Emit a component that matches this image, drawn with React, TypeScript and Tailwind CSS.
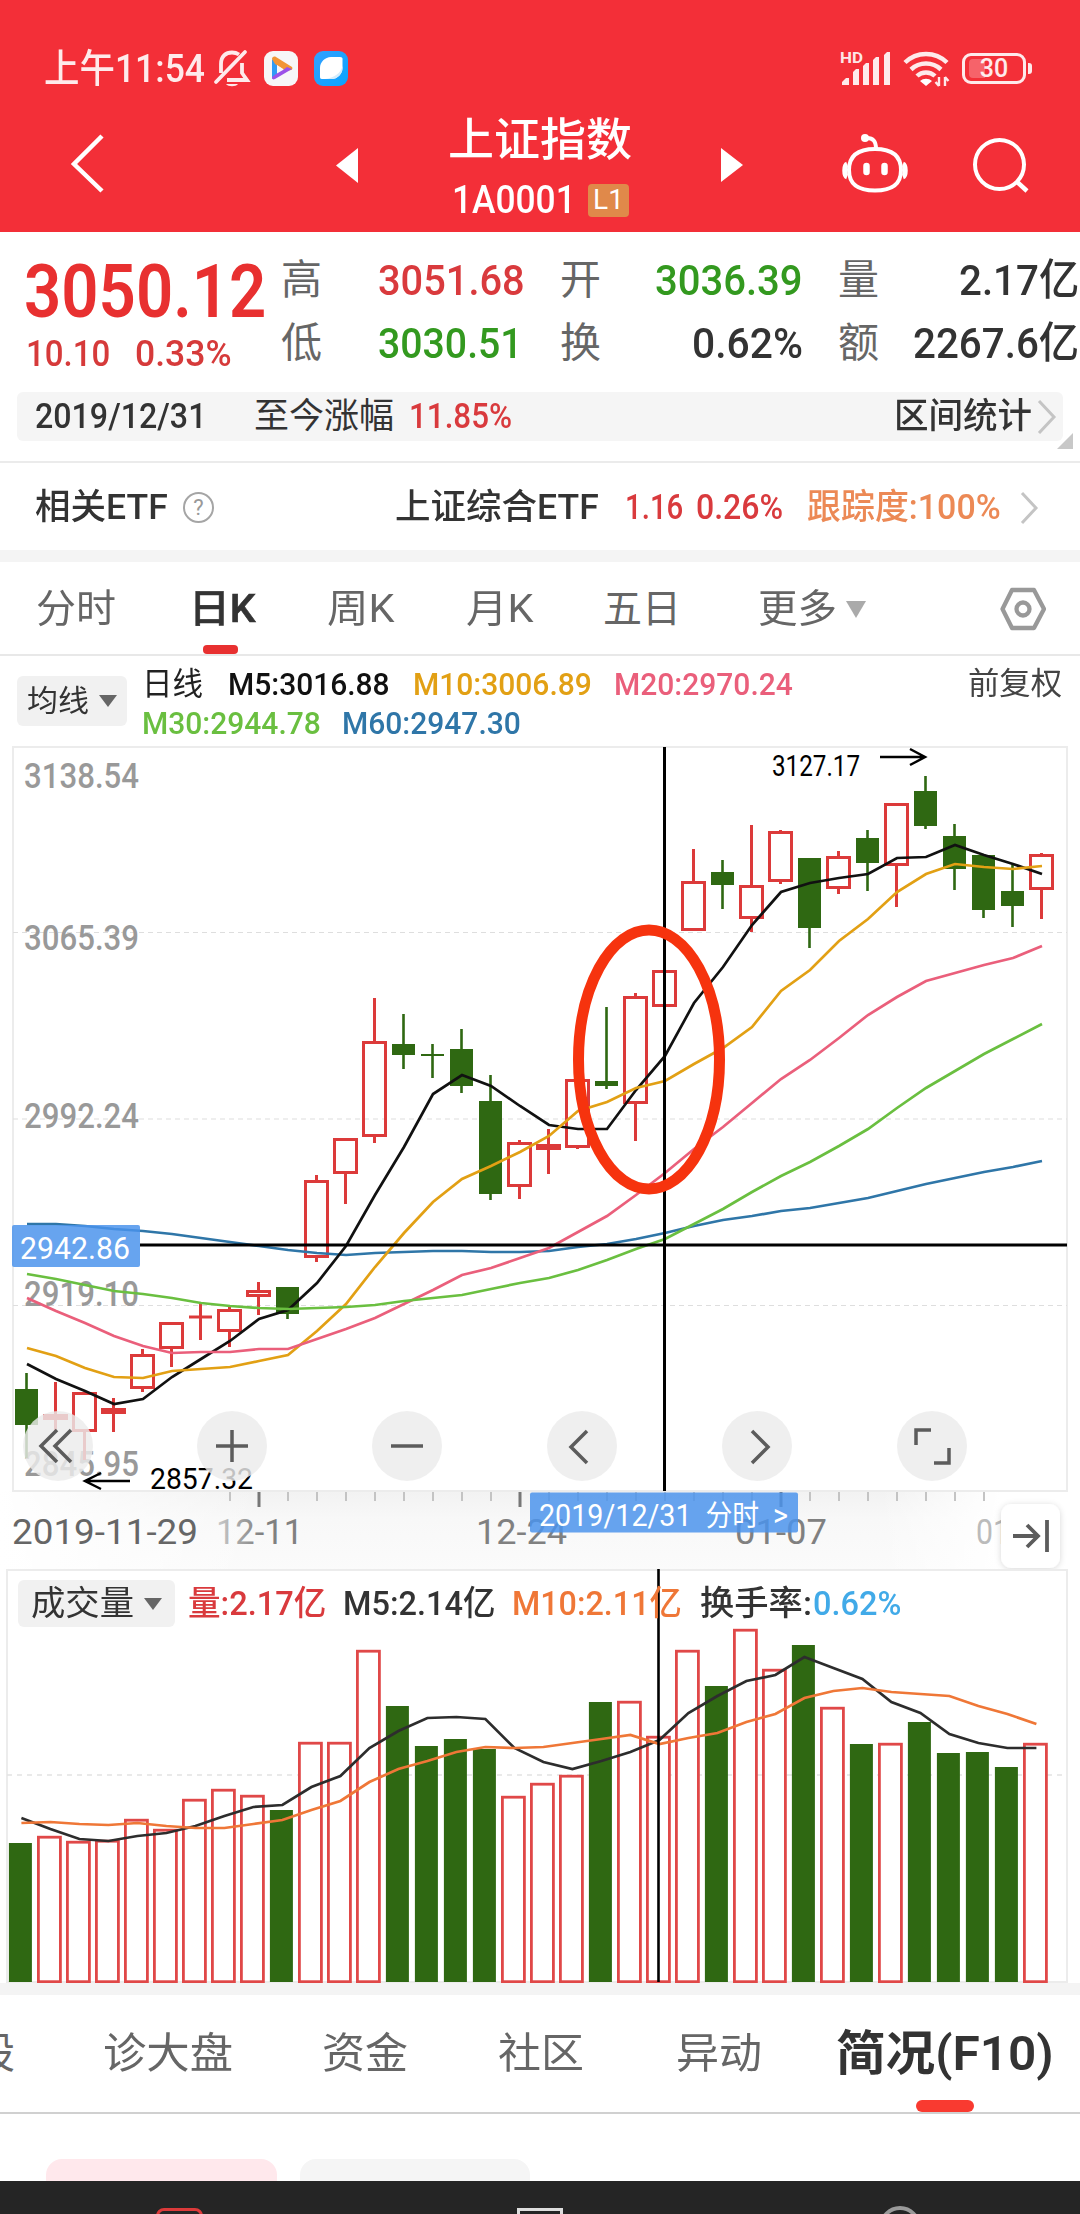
import { ReactNode, useLayoutEffect, useRef, useState } from "react";

/* Single-line text squeezed or stretched horizontally to a given width. */
function Fit({ w, className = "", children }: { w: number; className?: string; children: ReactNode }) {
  const ref = useRef<HTMLSpanElement>(null);
  const [k, setK] = useState(1);
  useLayoutEffect(() => {
    if (ref.current) setK(w / ref.current.offsetWidth);
  }, [w, children]);
  return (
    <span className={`block shrink-0 ${className}`} style={{ width: w }}>
      <span ref={ref} className="inline-block origin-left whitespace-nowrap" style={{ transform: `scaleX(${k})` }}>
        {children}
      </span>
    </span>
  );
}

type Candle = [up: number, top: number, bottom: number, high: number, low: number];

const candles: Candle[] = [
  [0, 1389, 1425, 1373, 1458], [1, 1414, 1420, 1382, 1432], [1, 1392, 1432, 1392, 1460], [1, 1408, 1414, 1398, 1432],
  [1, 1354, 1389, 1349, 1392], [1, 1322, 1349, 1322, 1367], [1, 1316, 1318, 1304, 1340], [1, 1309, 1332, 1307, 1347],
  [1, 1290, 1297, 1282, 1315], [0, 1287, 1314, 1287, 1319], [1, 1180, 1258, 1175, 1262], [1, 1138, 1174, 1138, 1204],
  [1, 1041, 1137, 998, 1143], [0, 1044, 1055, 1014, 1069], [0, 1054, 1056, 1044, 1078], [0, 1049, 1086, 1029, 1093],
  [0, 1101, 1194, 1075, 1200], [1, 1142, 1187, 1140, 1199], [1, 1144, 1150, 1129, 1174], [1, 1079, 1148, 1079, 1149],
  [0, 1081, 1086, 1007, 1089], [1, 996, 1104, 993, 1141], [1, 970, 1007, 970, 1021], [1, 881, 931, 849, 931],
  [0, 872, 885, 860, 909], [1, 885, 919, 825, 932], [1, 831, 882, 830, 884], [0, 858, 928, 858, 948],
  [1, 856, 889, 851, 894], [0, 838, 863, 830, 891], [1, 803, 866, 803, 907], [0, 791, 826, 776, 829],
  [0, 836, 869, 824, 890], [0, 855, 910, 855, 918], [0, 891, 906, 865, 927], [1, 854, 890, 853, 919],
];

const averages: { color: string; ys: number[] }[] = [
  { color: "#2f76a8", ys: [1224, 1224, 1226, 1229, 1231, 1234, 1238, 1242, 1246, 1250, 1253, 1255, 1253, 1252, 1251, 1251, 1252, 1252, 1251, 1247, 1244, 1239, 1233, 1226, 1220, 1216, 1211, 1208, 1203, 1198, 1191, 1184, 1178, 1172, 1167, 1161] },
  { color: "#111111", ys: [1364, 1379, 1391, 1404, 1399, 1377, 1359, 1341, 1319, 1310, 1283, 1246, 1195, 1147, 1094, 1075, 1086, 1106, 1125, 1129, 1129, 1090, 1056, 1003, 967, 925, 892, 883, 878, 874, 858, 857, 845, 855, 864, 874] },
  { color: "#e2a014", ys: [1348, 1356, 1368, 1377, 1378, 1371, 1369, 1367, 1361, 1355, 1331, 1304, 1267, 1233, 1202, 1179, 1166, 1152, 1136, 1111, 1102, 1088, 1081, 1064, 1048, 1027, 991, 970, 941, 919, 892, 874, 864, 867, 869, 866] },
  { color: "#ea5f7b", ys: [1298, 1311, 1323, 1336, 1346, 1353, 1352, 1352, 1349, 1349, 1339, 1329, 1318, 1304, 1290, 1275, 1268, 1258, 1248, 1232, 1216, 1195, 1173, 1149, 1127, 1103, 1079, 1060, 1038, 1015, 997, 981, 973, 965, 958, 946] },
  { color: "#6abf40", ys: [1274, 1279, 1285, 1291, 1294, 1298, 1303, 1306, 1308, 1309, 1308, 1307, 1305, 1301, 1298, 1295, 1289, 1283, 1278, 1270, 1260, 1249, 1239, 1224, 1209, 1192, 1176, 1162, 1146, 1129, 1108, 1088, 1071, 1054, 1039, 1024] },
];

const volumeTops = [1843, 1836, 1841, 1840, 1819, 1829, 1799, 1789, 1795, 1810, 1742, 1742, 1650, 1706, 1746, 1739, 1749, 1796, 1783, 1775, 1702, 1701, 1736, 1650, 1686, 1629, 1669, 1645, 1707, 1744, 1743, 1722, 1753, 1752, 1767, 1743];
const volumeUp = [0, 1, 1, 1, 1, 1, 1, 1, 1, 0, 1, 1, 1, 0, 0, 0, 0, 1, 1, 1, 0, 1, 1, 1, 0, 1, 1, 0, 1, 0, 1, 0, 0, 0, 0, 1];
const volumeM5 = [1818, 1829, 1839, 1841, 1836, 1833, 1826, 1816, 1807, 1805, 1787, 1776, 1748, 1731, 1718, 1717, 1719, 1748, 1762, 1769, 1761, 1752, 1740, 1713, 1696, 1681, 1675, 1657, 1668, 1679, 1702, 1713, 1734, 1743, 1748, 1748];
const volumeM10 = [1823, 1822, 1824, 1825, 1823, 1826, 1828, 1828, 1824, 1820, 1810, 1801, 1782, 1769, 1761, 1752, 1747, 1748, 1747, 1743, 1739, 1735, 1744, 1738, 1733, 1722, 1714, 1698, 1691, 1688, 1692, 1694, 1696, 1706, 1714, 1724];

const line = (ys: number[], x0: number) => ys.map((y, i) => `${(x0 + i * 29).toFixed(1)},${y}`).join(" ");

function StatusBar() {
  return (
    <div className="flex h-[60px] items-center pl-[44px] pr-[48px] text-white/90">
      <Fit w={161} className="pt-[1px] text-[39px] font-medium leading-[60px]">上午11:54</Fit>
      <svg className="ml-[8px]" width="38" height="40" viewBox="0 0 38 40" fill="none" stroke="#fff" strokeOpacity=".9" strokeWidth="3.800">
        <path d="M8 25V16C8 8 13 4.500 19 4.500c3 0 5 .7 7 2M29 15v10l5 7H14" />
        <path d="M32 4L3 34" strokeLinecap="round" />
        <path d="M13 36h12c-2 3-10 3-12 0z" fill="#fff" stroke="none" fillOpacity=".9" />
      </svg>
      <svg className="ml-[13px]" width="34" height="35" viewBox="0 0 34 35">
        <rect width="34" height="35" rx="9" fill="#f7f6f8" />
        <path d="M8 8v20l5-3V12z" fill="#2f9bf5" />
        <path d="M8 8c0-2 2-3 4-2l16 10c1 1 0 3-1 3l-5 1-11-7z" fill="#f29435" />
        <path d="M28 18L11 28c-2 1-3 0-3-2l4-3 7-4 4-3z" fill="#9b51e8" />
        <path d="M13 14v8l6-4z" fill="#f7f6f8" />
      </svg>
      <svg className="ml-[16px]" width="34" height="35" viewBox="0 0 34 35">
        <defs>
          <linearGradient id="sky" x1="0" x2="1" y1="0" y2="1">
            <stop offset="0" stopColor="#34a0ff" />
            <stop offset="1" stopColor="#08a4ff" />
          </linearGradient>
        </defs>
        <rect width="34" height="35" rx="9" fill="url(#sky)" />
        <path d="M17 6h9c2 0 3 1 2.500 3V17c0 6-5 11-11 11H8c-2 0-2-1-2-3v-8C6 11 11 6 17 6z" fill="#fff" />
        <path d="M28.500 15v2c0 6-5 11-11 11H11C20 27 27 22 28.500 15z" fill="#d5ecfb" />
      </svg>
      <svg className="ml-auto" width="52" height="37" viewBox="0 0 52 37" fill="#fff" fillOpacity=".9">
        <text x="0" y="13" fontSize="15" fontWeight="700" fontFamily="Roboto, sans-serif" textLength="23" lengthAdjust="spacingAndGlyphs">HD</text>
        <path d="M2 32l4-4h3v7H2z" />
        <path d="M13 22l3-3h3v16h-6z" />
        <path d="M23 16l3-3h3v22h-6z" />
        <path d="M33 10l3-3h3v28h-6z" />
        <path d="M44 5l3-3h3v33h-6z" />
      </svg>
      <svg className="ml-[11px]" width="48" height="37" viewBox="0 0 48 37" fill="none" stroke="#fff" strokeOpacity=".9" strokeWidth="4.500">
        <path d="M2 12.500a30 30 0 0 1 42 0" />
        <path d="M8 19.500a22 22 0 0 1 30 0" />
        <path d="M14 26a13 13 0 0 1 18 0" />
        <path d="M17 31a9 9 0 0 1 12 0l-6 5z" fill="#fff" stroke="none" />
        <path d="M36 27v9m-3.500-4l3.500 4M42 36v-9m3.500 4l-3.500-4" strokeWidth="2.400" />
      </svg>
      <span className="relative ml-[11px] flex h-[31px] w-[64px] items-center justify-center rounded-[9px] border-[3px] border-white/90">
        <span className="absolute left-[4px] top-[3px] h-[19px] w-[16px] rounded-l-[4px] bg-white/25" />
        <span className="relative text-[25px] font-medium leading-none">30</span>
      </span>
      <span className="ml-[2px] h-[11px] w-[4px] rounded-r-[3px] bg-white/90" />
    </div>
  );
}

function TitleBar() {
  return (
    <div className="flex h-[134px] items-start text-white">
      <svg className="ml-[68px] mt-[35px]" width="38" height="62" viewBox="0 0 38 62" fill="none" stroke="#fff" strokeWidth="4.500">
        <path d="M34 3L6 31l28 27" />
      </svg>
      <svg className="ml-[230px] mt-[50px]" width="22" height="35" viewBox="0 0 22 35" fill="#fff"><path d="M22 0v35L0 17.500z" /></svg>
      <div className="ml-[90px] flex w-[184px] flex-col items-start">
        <Fit w={184} className="mt-[16px] text-[45px] font-medium leading-[54px]">上证指数</Fit>
        <div className="mt-[10px] flex items-center pl-[4px]">
          <Fit w={124} className="text-[39px] font-medium leading-[44px]">1A0001</Fit>
          <span className="ml-[12px] flex h-[33px] w-[41px] items-center justify-center rounded-[4px] bg-[#e0894a] text-[28px] leading-none">L1</span>
        </div>
      </div>
      <svg className="ml-[89px] mt-[50px]" width="22" height="34" viewBox="0 0 22 34" fill="#fff"><path d="M0 0v34l22-17z" /></svg>
      <svg className="ml-[99px] mt-[35px]" width="66" height="62" viewBox="0 0 66 62" fill="none" stroke="#fff" strokeWidth="4">
        <path d="M33 16c15 0 26 5 26 21S48 57.500 33 57.500 7 53 7 37s11-21 26-21z" />
        <path d="M5 31c-3 1-3 12 0 13M61 31c3 1 3 12 0 13" strokeWidth="5" />
        <path d="M34 16c0-8-3-11-9-11" strokeLinecap="round" />
        <circle cx="23" cy="5" r="4" fill="#fff" stroke="none" />
        <path d="M24.500 33v6M42.500 33v6" strokeWidth="6.500" strokeLinecap="round" />
      </svg>
      <svg className="ml-[63px] mt-[38px]" width="60" height="60" viewBox="0 0 60 60" fill="none" stroke="#fff" strokeWidth="4">
        <circle cx="28.500" cy="28.500" r="24.500" />
        <path d="M45 45l11 10" strokeWidth="4.500" />
      </svg>
    </div>
  );
}

function Quote() {
  return (
    <div className="flex h-[160px] items-start whitespace-nowrap text-[43px] font-medium leading-[63px] text-[#333]">
      <div className="ml-[24px] w-[257px]">
        <Fit w={242} className="mt-[21px] text-[75px] font-semibold leading-[76px] text-[#e83030]">3050.12</Fit>
        <div className="mt-[6px] flex items-start pl-[2px] text-[37px] leading-[38px] text-[#d63a3a]">
          <Fit w={84}>10.10</Fit>
          <Fit w={97} className="ml-[25px]">0.33%</Fit>
        </div>
      </div>
      <div className="mt-[17px] w-[279px]">
        <div className="flex"><span className="w-[97px] text-[41px] font-normal text-[#666]">高</span><Fit w={147} className="text-[#d93a3d]">3051.68</Fit></div>
        <div className="flex"><span className="w-[97px] text-[41px] font-normal text-[#666]">低</span><Fit w={145} className="text-[#33991f]">3030.51</Fit></div>
      </div>
      <div className="mt-[17px] w-[278px]">
        <div className="flex"><span className="w-[95px] text-[41px] font-normal text-[#666]">开</span><Fit w={148} className="text-[#33991f]">3036.39</Fit></div>
        <div className="flex"><span className="w-[132px] text-[41px] font-normal text-[#666]">换</span><Fit w={111}>0.62%</Fit></div>
      </div>
      <div className="mt-[17px] w-[242px]">
        <div className="flex"><span className="w-[121px] text-[41px] font-normal text-[#666]">量</span><Fit w={120}>2.17亿</Fit></div>
        <div className="flex"><span className="w-[75px] text-[41px] font-normal text-[#666]">额</span><Fit w={166}>2267.6亿</Fit></div>
      </div>
    </div>
  );
}

function RangeRow() {
  return (
    <div className="relative h-[71px] border-b-2 border-[#ebebeb]">
      <div className="ml-[17px] flex h-[49px] w-[1046px] items-center rounded-[6px] bg-[#f5f5f5] pl-[18px] pt-[1px] text-[35px] leading-[48px] text-[#333]">
        <Fit w={171} className="font-medium">2019/12/31</Fit>
        <Fit w={140} className="ml-[48px]">至今涨幅</Fit>
        <Fit w={103} className="ml-[15px] font-medium text-[#d93a3d]">11.85%</Fit>
        <Fit w={138} className="ml-auto font-medium">区间统计</Fit>
        <svg className="ml-[5px] mr-[6px]" width="20" height="34" viewBox="0 0 20 34" fill="none" stroke="#c4c4c4" strokeWidth="3"><path d="M2 1l15 16L2 33" /></svg>
      </div>
      <svg className="absolute left-[1057px] top-[41px]" width="16" height="16" viewBox="0 0 16 16"><path d="M16 0v16H0z" fill="#c8c8c8" /></svg>
    </div>
  );
}

function EtfRow() {
  return (
    <div className="flex h-[87px] items-center pl-[35px] pt-[2px] text-[35px] font-medium leading-[50px] text-[#333]">
      <Fit w={133}>相关ETF</Fit>
      <span className="ml-[15px] flex size-[31px] items-center justify-center rounded-full border-2 border-[#a5a5a5] text-[22px] font-normal leading-none text-[#999]">?</span>
      <Fit w={204} className="ml-[181px]">上证综合ETF</Fit>
      <Fit w={58} className="ml-[26px] text-[#d93a3d]">1.16</Fit>
      <Fit w={87} className="ml-[13px] text-[#d93a3d]">0.26%</Fit>
      <Fit w={194} className="ml-[24px] text-[#ec8955]">跟踪度:100%</Fit>
      <svg className="ml-[19px]" width="20" height="34" viewBox="0 0 20 34" fill="none" stroke="#c4c4c4" strokeWidth="3"><path d="M2 2l14 15L2 32" /></svg>
    </div>
  );
}

function PeriodTabs() {
  return (
    <div className="flex h-[94px] items-center border-b-2 border-[#e8e8e8] pl-[36px] pt-[2px] text-[39px] leading-[90px] text-[#666]">
      <Fit w={80}>分时</Fit>
      <div className="relative ml-[73px] font-medium text-[#333]">
        <Fit w={67} className="[-webkit-text-stroke:0.6px_#333]">日K</Fit>
        <span className="absolute left-[14px] top-[81px] h-[9px] w-[35px] rounded-[4px] bg-[#e83030]" />
      </div>
      <Fit w={67} className="ml-[71px]">周K</Fit>
      <Fit w={67} className="ml-[72px]">月K</Fit>
      <Fit w={78} className="ml-[70px]">五日</Fit>
      <Fit w={79} className="ml-[77px]">更多</Fit>
      <svg className="ml-[9px]" width="20" height="17" viewBox="0 0 20 17"><path d="M0 0h20L10 17z" fill="#aaa" /></svg>
      <svg className="ml-[134px]" width="46" height="44" viewBox="0 0 46 44" fill="none" stroke="#999" strokeWidth="4.300" strokeLinejoin="round">
        <path d="M12 3h22l10 19-10 19H12L2.500 22z" /><circle cx="23" cy="22" r="6.500" />
      </svg>
    </div>
  );
}

function AverageLegend() {
  return (
    <div className="flex h-[84px] items-start pl-[17px] text-[32px] font-medium leading-[38px]">
      <div className="mt-[20px] flex h-[50px] w-[110px] items-center rounded-[6px] bg-[#f1f1f1] pl-[10px] text-[30px] font-normal leading-[50px] text-[#333]">
        <Fit w={62}>均线</Fit>
        <svg className="ml-[10px]" width="18" height="12" viewBox="0 0 18 12"><path d="M0 0h18L9 12z" fill="#666" /></svg>
      </div>
      <div className="ml-[15px] mt-[9px]">
        <div className="flex">
          <Fit w={61} className="font-normal text-[#222]">日线</Fit>
          <Fit w={162} className="ml-[25px] text-[#111]">M5:3016.88</Fit>
          <Fit w={179} className="ml-[23px] text-[#e2a014]">M10:3006.89</Fit>
          <Fit w={179} className="ml-[22px] text-[#ea5f7b]">M20:2970.24</Fit>
          <Fit w={94} className="ml-[175px] text-[31px] font-normal text-[#444]">前复权</Fit>
        </div>
        <div className="flex pt-[1px]">
          <Fit w={179} className="text-[#6abf40]">M30:2944.78</Fit>
          <Fit w={179} className="ml-[21px] text-[#2f76a8]">M60:2947.30</Fit>
        </div>
      </div>
    </div>
  );
}

const chartFont = '"Roboto", "Noto Sans CJK SC", sans-serif';

function Label({ x, y, w, size, fill, weight = 400, children }: { x: number; y: number; w: number; size: number; fill: string; weight?: number; children: ReactNode }) {
  return (
    <text x={x} y={y} textLength={w} lengthAdjust="spacingAndGlyphs" fontSize={size} fontWeight={weight} fill={fill} fontFamily={chartFont}>
      {children}
    </text>
  );
}

const buttonIcons = [
  { x: 58, d: "M-1 -16L-17 0L-1 16M13 -16L-3 0L13 16" },
  { x: 232, d: "M-16 0H16M0 -16V16" },
  { x: 407, d: "M-16 0H16" },
  { x: 582, d: "M5 -15L-11 1L5 17" },
  { x: 757, d: "M-5 -15L11 1L-5 17" },
  { x: 932, d: "M-16 -1V-16H-1M2 17H17V2" },
];

function PriceChart() {
  return (
    <svg className="block" width="1080" height="829" viewBox="0 740 1080 829">
      <defs>
        <linearGradient id="haze" x1="0" x2="0" y1="0" y2="1">
          <stop offset="0" stopColor="#f2f2f2" />
          <stop offset=".35" stopColor="#f8f8f8" />
          <stop offset="1" stopColor="#fbfbfb" />
        </linearGradient>
        <linearGradient id="edge" x1="0" x2="1" y1="0" y2="0">
          <stop offset="0" stopColor="#fff" />
          <stop offset="1" stopColor="#fff" stopOpacity="0" />
        </linearGradient>
        <linearGradient id="edgeRight" x1="0" x2="1" y1="0" y2="0">
          <stop offset="0" stopColor="#fff" stopOpacity="0" />
          <stop offset=".6" stopColor="#fff" />
        </linearGradient>
        <linearGradient id="fadeDate" gradientUnits="userSpaceOnUse" x1="216" x2="262" y1="0" y2="0">
          <stop offset="0" stopColor="#ccc" />
          <stop offset="1" stopColor="#808080" />
        </linearGradient>
        <filter id="soft" x="-30%" y="-30%" width="160%" height="160%">
          <feDropShadow dx="0" dy="1" stdDeviation="3" floodOpacity=".16" />
        </filter>
      </defs>
      <rect x="0" y="1491" width="1080" height="80" fill="url(#haze)" />
      <rect x="0" y="1491" width="260" height="80" fill="url(#edge)" />
      <rect x="880" y="1491" width="200" height="80" fill="url(#edgeRight)" />
      <path d="M13 747H1067V1491H13Z" fill="none" stroke="#ececec" strokeWidth="2" />
      {[932.5, 1119, 1305.5].map((y) => (
        <path key={y} d={`M13 ${y}H1067`} stroke="#dedede" strokeWidth="1.200" strokeDasharray="5 4" />
      ))}
      <Label x={24} y={788} w={115} size={35} fill="#999" weight={500}>3138.54</Label>
      <Label x={24} y={950} w={115} size={35} fill="#999" weight={500}>3065.39</Label>
      <Label x={24} y={1128} w={115} size={35} fill="#999" weight={500}>2992.24</Label>
      <Label x={24} y={1306} w={115} size={35} fill="#999" weight={500}>2919.10</Label>
      <Label x={24} y={1476} w={115} size={35} fill="#999" weight={500}>2845.95</Label>
      {candles.map(([up, top, bottom, high, low], i) => {
        const x = 26.5 + i * 29;
        return up ? (
          <g key={i} fill="none" stroke="#dc3a3a" strokeWidth="3">
            <path d={`M${x} ${high}V${top}M${x} ${bottom}V${low}`} />
            {bottom - top < 4 ? (
              <path d={`M${x - 11.5} ${(top + bottom) / 2}h23`} />
            ) : (
              <rect x={x - 11} y={top + 1.5} width="22" height={bottom - top - 3} />
            )}
          </g>
        ) : (
          <g key={i} fill="#2f6812">
            <rect x={x - 1.3} y={high} width="2.600" height={low - high} />
            <rect x={x - 11.5} y={top} width="23" height={bottom - top} />
          </g>
        );
      })}
      {averages.map(({ color, ys }) => (
        <polyline key={color} points={line(ys, 27)} fill="none" stroke={color} strokeWidth="2.700" />
      ))}
      <path d="M140 1245H1067M664.500 747V1491" stroke="#000" strokeWidth="3" />
      <ellipse cx="649" cy="1059.500" rx="70.500" ry="129.500" fill="none" stroke="#f6330e" strokeWidth="11" />
      <rect x="12" y="1225" width="128" height="42" rx="2" fill="#4a92ec" fillOpacity=".84" />
      <Label x={20} y={1259} w={110} size={31} fill="#fff">2942.86</Label>
      <Label x={772} y={776} w={88} size={30} fill="#000">3127.17</Label>
      <path d="M880 757H925M910 749L925 757L910 765" fill="none" stroke="#000" strokeWidth="2.500" />
      <Label x={150} y={1489} w={103} size={30} fill="#000">2857.32</Label>
      <path d="M130 1481H85M101 1473L85 1481L101 1489" fill="none" stroke="#000" strokeWidth="2.500" />
      {buttonIcons.map(({ x, d }) => (
        <g key={x} transform={`translate(${x} 1446)`}>
          <circle r="35" fill="#ebebeb" fillOpacity=".82" />
          <path d={d} fill="none" stroke="#5c5c5c" strokeWidth="3.500" />
        </g>
      ))}
      {Array.from({ length: 27 }, (_, i) => i).filter((i) => i < 23 || i > 0).slice(0, 27).map((i) => {
        const major = i === 1 || i === 10 || i === 19;
        return <path key={i} d={`M${230 + i * 29} 1492V${major ? 1507 : 1501}`} stroke={major ? "#777" : "#c4c4c4"} strokeWidth={major ? 3 : 2} />;
      })}
      <Label x={12} y={1544} w={186} size={35} fill="#666">2019-11-29</Label>
      <Label x={216} y={1544} w={87} size={35} fill="url(#fadeDate)">12-11</Label>
      <Label x={476} y={1544} w={91} size={35} fill="#808080">12-24</Label>
      <Label x={735} y={1544} w={92} size={35} fill="#808080">01-07</Label>
      <Label x={976} y={1544} w={34} size={35} fill="#bbb">01</Label>
      <rect x="530" y="1492.500" width="268" height="40" rx="2" fill="#4a92ec" fillOpacity=".84" />
      <Label x={539} y={1526} w={249} size={31} fill="#fff">
        2019/12/31<tspan dx="15" fontSize="29">分时</tspan><tspan dx="15">&gt;</tspan>
      </Label>
      <rect x="1001" y="1504" width="59" height="64" rx="11" fill="#fff" filter="url(#soft)" />
      <path d="M1013 1536H1038M1027 1525L1038 1536L1027 1547M1047 1520V1552" fill="none" stroke="#5c5c5c" strokeWidth="3.800" />
    </svg>
  );
}

function VolumePanel() {
  return (
    <div className="relative h-[414px]">
      <svg className="block" width="1080" height="414" viewBox="0 1569 1080 414">
        <path d="M7 1570H1067V1982H7Z" fill="#fff" stroke="#ececec" strokeWidth="2" />
        <path d="M7 1775H1067" stroke="#e2e2e2" strokeWidth="1.300" strokeDasharray="5 5" />
        {volumeTops.map((top, i) => {
          const x = 20.4 + i * 29;
          return volumeUp[i] ? (
            <rect key={i} x={x - 11} y={top + 1.2} width="22" height={1980.5 - top} fill="#fff" stroke="#e04848" strokeWidth="2.800" />
          ) : (
            <rect key={i} x={x - 11.5} y={top} width="23" height={1982 - top} fill="#2f6812" />
          );
        })}
        <polyline points={line(volumeM5, 21.4)} fill="none" stroke="#2d2d2d" strokeWidth="2.700" />
        <polyline points={line(volumeM10, 21.4)} fill="none" stroke="#ef7737" strokeWidth="2.700" />
        <path d="M658.500 1569V1982" stroke="#000" strokeWidth="2.600" />
      </svg>
      <div className="absolute inset-x-0 top-[11px] flex h-[47px] items-center pl-[18px] text-[34px] font-medium leading-[47px] text-[#333]">
        <div className="flex h-[47px] w-[157px] items-center rounded-[6px] bg-[#f1f1f1] pl-[13px]">
          <Fit w={103} className="font-normal">成交量</Fit>
          <svg className="ml-[10px]" width="18" height="12" viewBox="0 0 18 12"><path d="M0 0h18L9 12z" fill="#666" /></svg>
        </div>
        <Fit w={138} className="ml-[13px] text-[#d93a3d]">量:2.17亿</Fit>
        <Fit w={152} className="ml-[17px]">M5:2.14亿</Fit>
        <Fit w={170} className="ml-[17px] text-[#ef7737]">M10:2.11亿</Fit>
        <Fit w={112} className="ml-[18px]">换手率:</Fit>
        <Fit w={88} className="ml-[1px] text-[#41aae8]">0.62%</Fit>
      </div>
    </div>
  );
}

function SectionTabs() {
  return (
    <div className="relative h-[119px] overflow-hidden border-b-2 border-[#d0d0d0]">
      <div className="-ml-[27px] flex h-[117px] w-[1107px] text-[42px] leading-[117px] text-[#666]">
        <Fit w={42}>股</Fit>
        <Fit w={130} className="ml-[88px]">诊大盘</Fit>
        <Fit w={86} className="ml-[89px]">资金</Fit>
        <Fit w={86} className="ml-[90px]">社区</Fit>
        <Fit w={86} className="ml-[92px]">异动</Fit>
        <Fit w={218} className="ml-[74px] text-[48px] font-semibold text-[#333]">简况(F10)</Fit>
      </div>
      <span className="absolute left-[916px] top-[105px] h-[12px] w-[58px] rounded-[6px] bg-[#f93a30]" />
    </div>
  );
}

export default function App() {
  return (
    <div className="h-[2214px] w-[1080px] overflow-hidden bg-white font-['Roboto','Noto_Sans_CJK_SC',sans-serif]">
      <header className="h-[232px] bg-[#f32f38] pt-[38px]">
        <StatusBar />
        <TitleBar />
      </header>
      <Quote />
      <RangeRow />
      <EtfRow />
      <div className="h-[12px] bg-[#f4f4f4]" />
      <PeriodTabs />
      <AverageLegend />
      <PriceChart />
      <VolumePanel />
      <div className="h-[12px] bg-[#f4f4f4]" />
      <SectionTabs />
      <div className="flex h-[67px] items-end gap-[23px] pl-[46px]">
        <span className="h-[22px] w-[231px] rounded-t-[16px] bg-[#ffe8ec]" />
        <span className="h-[22px] w-[230px] rounded-t-[16px] bg-[#f5f5f5]" />
      </div>
      <footer className="flex h-[40px] items-start overflow-hidden bg-[#252525] pt-[25px]">
        <span className="ml-[156px] mt-[2px] h-[40px] w-[47px] shrink-0 rounded-[8px] border-[3px] border-[#dc3a3a]" />
        <span className="ml-[314px] mt-[2px] h-[40px] w-[46px] shrink-0 border-[3px] border-[#ddd]" />
        <span className="ml-[316px] size-[42px] shrink-0 rounded-full border-4 border-[#999]" />
      </footer>
    </div>
  );
}
